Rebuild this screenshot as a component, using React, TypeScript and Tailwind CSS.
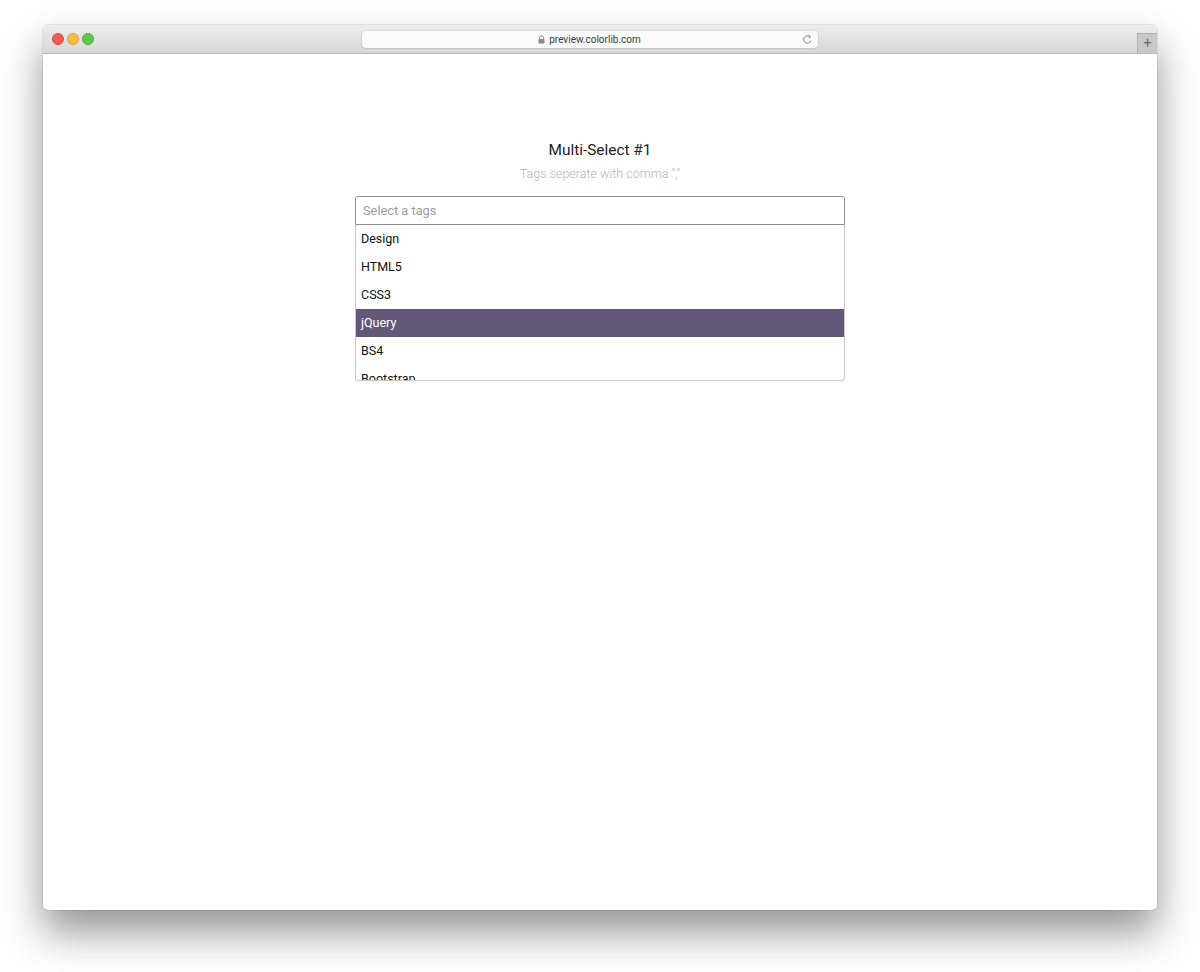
const tags = ['Design', 'HTML5', 'CSS3', 'jQuery', 'BS4', 'Bootstrap']

function TrafficLights() {
  return (
    <div className="flex items-center gap-[3px] pl-[9px]">
      <span className="h-[12px] w-[12px] rounded-full bg-[#ee5d55] border border-[#d8493f]" />
      <span className="h-[12px] w-[12px] rounded-full bg-[#f5bd3f] border border-[#dea230]" />
      <span className="h-[12px] w-[12px] rounded-full bg-[#5fc74e] border border-[#4aae3b]" />
    </div>
  )
}

function AddressBar() {
  return (
    <div className="flex h-[17px] w-[456px] items-center justify-center rounded-[4px] bg-[#fbfbfb] shadow-[0_0_0_0.5px_rgba(0,0,0,0.12),0_1px_1px_rgba(0,0,0,0.06)] relative">
      <div className="flex items-center gap-[4px] text-[10px] text-[#3a3a3a]">
        <svg width="7" height="9" viewBox="0 0 7 9" aria-hidden="true">
          <path d="M1.5 4V2.8a2 2 0 0 1 4 0V4" fill="none" stroke="#8a8a8a" strokeWidth="1" />
          <rect x="0.5" y="4" width="6" height="4.5" rx="0.8" fill="#8a8a8a" />
        </svg>
        <span>preview.colorlib.com</span>
      </div>
      <svg className="absolute right-[5px] top-[3px]" width="11" height="11" viewBox="0 0 12 12" aria-hidden="true">
        <path d="M9.6 7.2A4 4 0 1 1 8.4 3" fill="none" stroke="#7a7a7a" strokeWidth="1" />
        <path d="M7.2 1.2L9.4 3.1L7.3 4.6" fill="none" stroke="#7a7a7a" strokeWidth="1" />
      </svg>
    </div>
  )
}

export default function App() {
  return (
    <div className="min-h-[972px] w-full bg-white pt-[25px] font-['Roboto',sans-serif]">
      <div className="mx-[43px] h-[885px] overflow-hidden rounded-[5px] bg-white shadow-[0_22px_40px_rgba(0,0,0,0.42),0_0_0_1px_rgba(0,0,0,0.08)]">
        <div className="flex h-[29px] items-center border-b border-[#b9b9b9] bg-gradient-to-b from-[#ececec] to-[#d8d8d8]">
          <TrafficLights />
          <div className="flex flex-1 justify-center pl-[222px] pr-[274px]">
            <AddressBar />
          </div>
          <div className="flex h-[20px] w-[20px] items-center justify-center self-end border-l border-t border-[#b0b0b0] bg-[#c9c9c9] text-[15px] leading-none text-[#6a6a6a]">
            +
          </div>
        </div>

        <div className="flex flex-col items-center pt-[86px]">
          <h1 className="text-[15.4px] leading-[20px] text-[#222]">Multi-Select #1</h1>
          <p className="mt-[4px] text-[12.5px] font-light leading-[20px] text-[#b4b4b4]">
            Tags seperate with comma ","
          </p>

          <div className="mt-[12px] w-[490px]">
            <div className="flex h-[29px] items-center rounded-t-[3px] border border-[#8d8d8d] px-[7px] text-[12.8px] text-[#9c9c9c]">
              Select a tags
            </div>
            <ul className="h-[156px] overflow-hidden rounded-b-[3px] border border-t-0 border-[#c8c8c8] text-[12.5px] text-[#111]">
              {tags.map((t) => (
                <li
                  key={t}
                  className={
                    t === 'jQuery'
                      ? 'flex h-[28px] items-center bg-[#63587a] px-[5px] text-white'
                      : 'flex h-[28px] items-center px-[5px]'
                  }
                >
                  {t}
                </li>
              ))}
            </ul>
          </div>
        </div>
      </div>
    </div>
  )
}
